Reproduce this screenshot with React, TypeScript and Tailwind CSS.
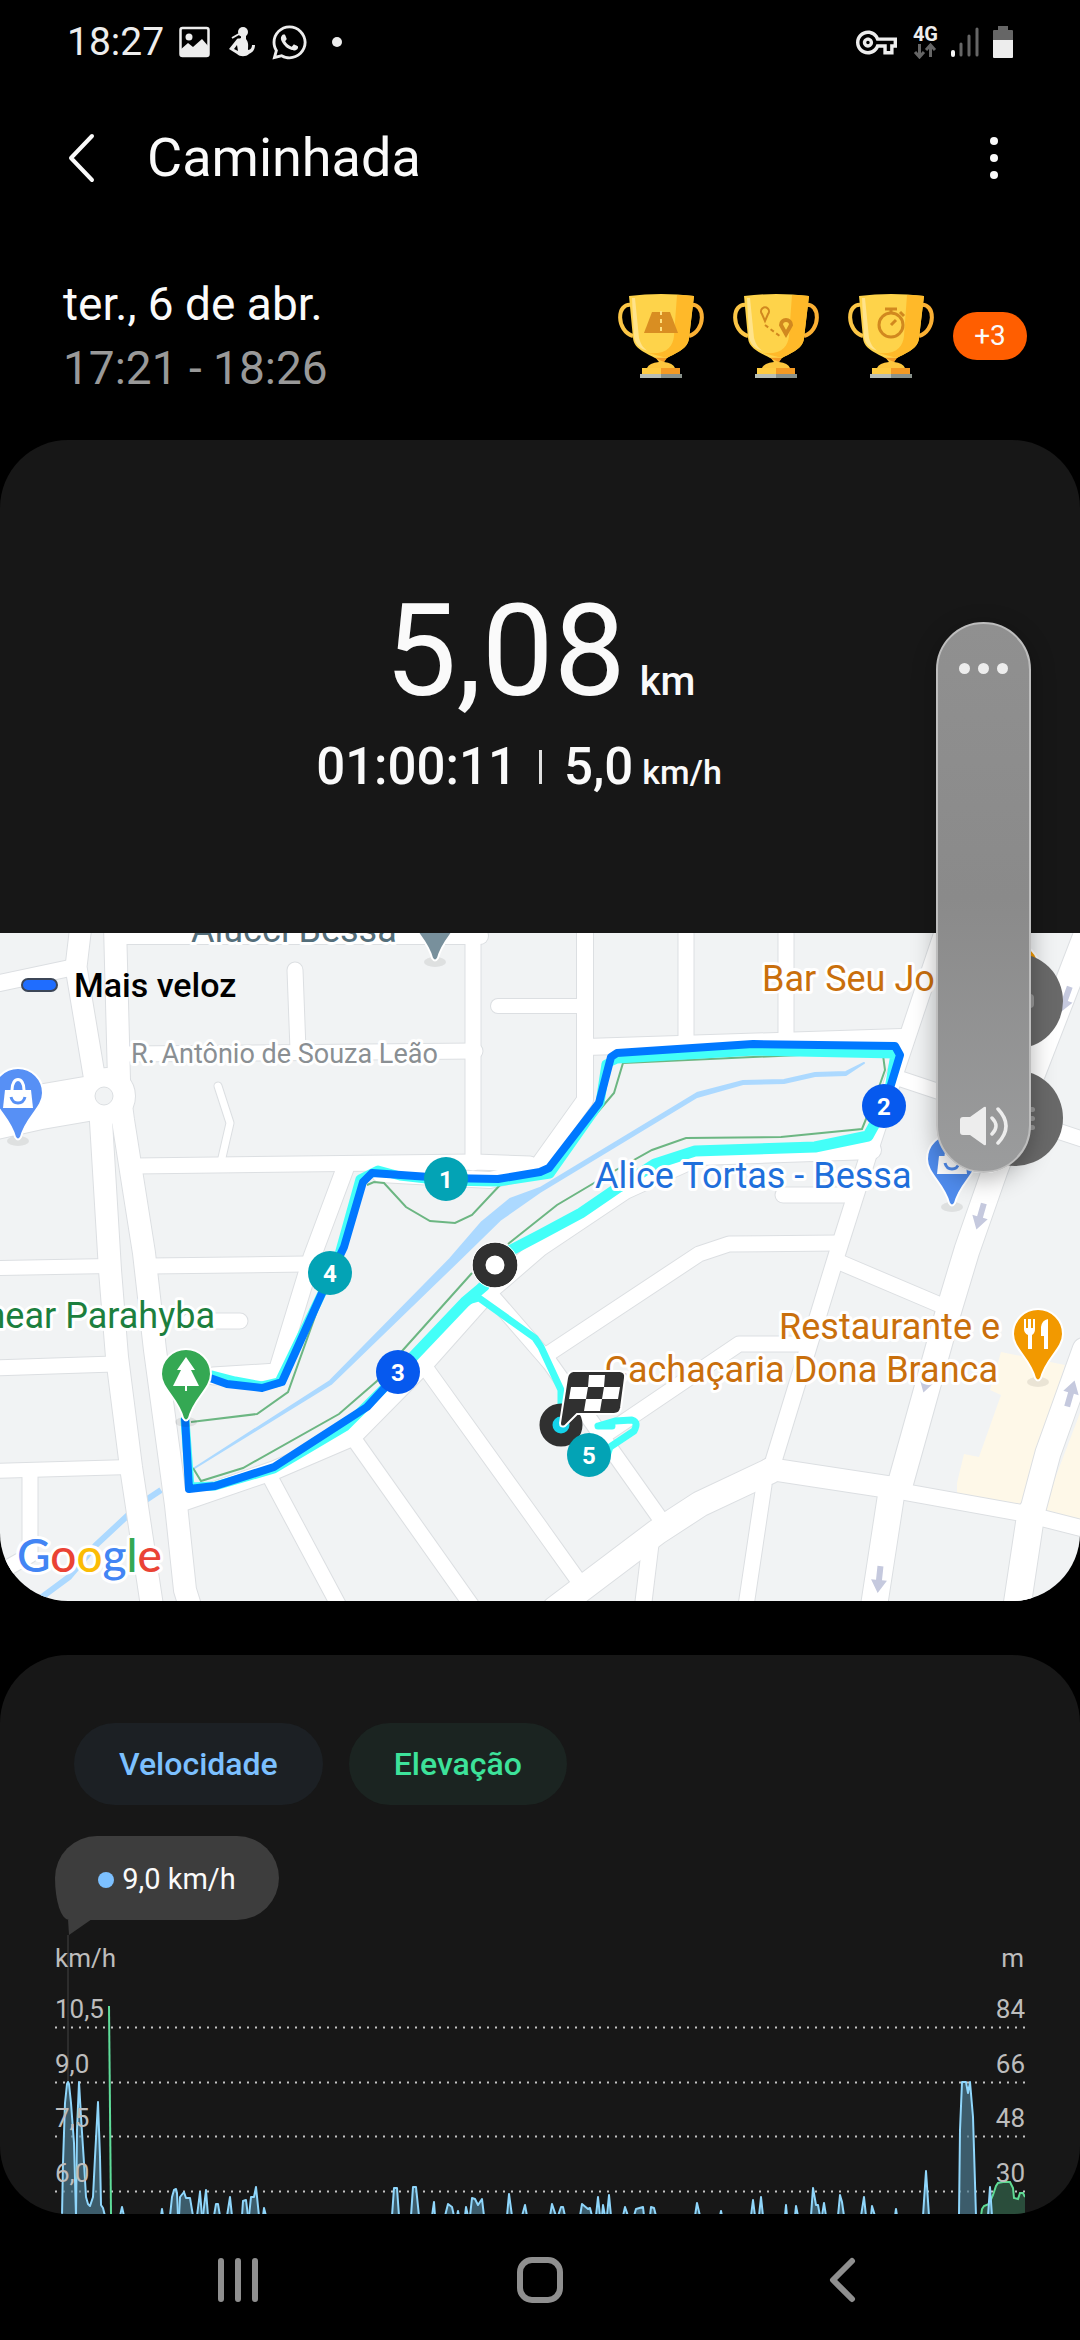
import { useState } from 'react';
import { FaWhatsapp } from 'react-icons/fa';
import { MdOutlineVpnKey } from 'react-icons/md';

const ROADS: { d: string; w: number }[] = [
  { d: 'M81 925L76 967L94 1075', w: 21 },
  { d: 'M115 925L119 1080', w: 22 },
  { d: 'M0 983L70 968', w: 16 },
  { d: 'M-5 1117L40 1107L104 1096', w: 44 },
  { d: 'M100 1105L110 1270L117 1357L131 1467L152 1606', w: 22 },
  { d: 'M119 1090L123 1120L144 1253L155 1350L176 1505L185 1590L190 1606', w: 22 },
  { d: 'M115 936L480 936', w: 16 },
  { d: 'M125 1054L475 1051', w: 15 },
  { d: 'M295 970L298 1050', w: 15 },
  { d: 'M218 1086L230 1123L221 1162', w: 7 },
  { d: 'M473 925L473 1163', w: 15 },
  { d: 'M498 1006L582 1006', w: 14 },
  { d: 'M135 1166L475 1162L530 1164', w: 15 },
  { d: 'M346 1166L312 1257L277 1372L213 1376', w: 17 },
  { d: 'M585 925L585 1100L535 1170L490 1180L380 1174', w: 16 },
  { d: 'M586 1047L902 1037', w: 16 },
  { d: 'M686 925L686 1044', w: 15 },
  { d: 'M786 925L786 1040', w: 15 },
  { d: 'M-5 1268L110 1266', w: 14 },
  { d: 'M150 1266L306 1264', w: 15 },
  { d: 'M-5 1368L114 1364', w: 15 },
  { d: 'M190 1321L240 1321', w: 15 },
  { d: 'M-5 1471L130 1467', w: 14 },
  { d: 'M30 1472L30 1555L-5 1575', w: 15 },
  { d: 'M176 1504L275 1470L352 1437L425 1363L490 1290L540 1247L625 1190L700 1156L872 1150', w: 18 },
  { d: 'M485 1288L550 1363L659 1517', w: 15 },
  { d: 'M425 1367L540 1527L580 1583', w: 15 },
  { d: 'M356 1442L472 1606', w: 15 },
  { d: 'M270 1477L339 1606', w: 15 },
  { d: 'M555 1609L657 1532L700 1504L770 1471', w: 25 },
  { d: 'M770 1469L888 1487', w: 22 },
  { d: 'M888 1489L1022 1513L1085 1529', w: 16 },
  { d: 'M764 1485L746 1606', w: 15 },
  { d: 'M651 1540L643 1606', w: 16 },
  { d: 'M892 1489L874 1606', w: 26 },
  { d: 'M900 1485L948 1313L967 1250L995 1170L1030 1080L1063 995L1090 925', w: 25 },
  { d: 'M1031 1513L1017 1606', w: 27 },
  { d: 'M1032 1513L1048 1453L1085 1350', w: 25 },
  { d: 'M772 1466L837 1254L870 1150L898 1065L945 925', w: 16 },
  { d: 'M895 1077L1000 1112L1085 1140', w: 15 },
  { d: 'M839 1262L945 1307', w: 15 },
  { d: 'M783 1195L852 1195', w: 15 },
  { d: 'M838 1243L729 1244L699 1254L548 1354', w: 15 },
  { d: 'M808 1344L739 1344L606 1434', w: 15 },
];

const MARKERS = [
  { n: 1, x: 446, y: 1179, fill: '#03a3b5' },
  { n: 2, x: 884, y: 1106, fill: '#0659ee' },
  { n: 3, x: 398, y: 1372, fill: '#0659ee' },
  { n: 4, x: 330, y: 1273, fill: '#03a3b5' },
  { n: 5, x: 589, y: 1455, fill: '#03a3b5' },
];

const ARROWS = [
  { x: 879, y: 1580, r: 6 },
  { x: 980, y: 1217, r: 16 },
  { x: 1071, y: 1393, r: 196 },
  { x: 1065, y: 1000, r: 20 },
  { x: 927, y: 1380, r: 16 },
];

// speed peaks, split wherever the curve drops under the visible part
const SPEED: string[] = [
  '62,2216 63,2163 65,2103 67,2084 68,2082 69,2084 71,2103 74,2143 76,2216',
  '76,2216 77,2130 79,2082 81,2117 84,2163 86,2197 88,2204 90,2206 93,2197 95,2157 98,2102 100,2157 101,2205 103,2208 105,2216',
  '120,2216 122,2207 124,2216',
  '161,2216 162,2209 163,2216',
  '170,2216 172,2197 174,2190 176,2189 177,2193 178,2216',
  '179,2216 180,2197 184,2192 186,2198 190,2198 193,2216',
  '197,2216 200,2192 202,2216',
  '203,2216 206,2190 208,2216',
  '214,2216 216,2204 218,2204 220,2216',
  '227,2216 230,2197 232,2216',
  '242,2216 243,2201 246,2200 248,2216',
  '249,2216 251,2197 254,2197 256,2187 259,2216',
  '263,2216 264,2208 266,2216',
  '392,2216 394,2188 397,2188 399,2216',
  '411,2216 413,2187 416,2187 419,2216',
  '432,2216 434,2202 435,2216',
  '445,2216 448,2204 452,2207 454,2216',
  '457,2216 458,2211 459,2216',
  '465,2216 466,2207 468,2216',
  '470,2216 472,2198 475,2199 478,2205 482,2199 484,2216',
  '507,2216 509,2194 512,2216',
  '522,2216 525,2205 527,2216',
  '550,2216 552,2204 556,2216',
  '558,2216 561,2207 563,2207 565,2216',
  '580,2216 582,2204 588,2209 590,2208 592,2216',
  '596,2216 598,2197 600,2216',
  '602,2216 603,2205 605,2216',
  '607,2216 609,2195 611,2216',
  '623,2216 625,2207 628,2216',
  '634,2216 636,2209 643,2207 644,2216',
  '650,2216 651,2207 654,2208 656,2216',
  '695,2216 697,2203 700,2216',
  '720,2216 721,2211 722,2216',
  '751,2216 753,2200 755,2216',
  '759,2216 761,2197 763,2216',
  '785,2216 786,2205 787,2216',
  '795,2216 796,2206 798,2216',
  '811,2216 813,2188 816,2205 818,2205 820,2216',
  '822,2216 824,2203 826,2216',
  '838,2216 840,2195 842,2202 844,2216',
  '861,2216 864,2197 866,2216',
  '871,2216 872,2206 875,2216',
  '895,2216 896,2209 897,2216',
  '923,2216 926,2171 929,2216',
  '959,2216 960,2130 962,2082 966,2082 968,2093 970,2082 973,2117 976,2216',
  '988,2216 990,2187 992,2216',
];

const ELEVATION =
  '981,2216 982,2209 984,2206 989,2204 993,2195 996,2186 998,2183 1003,2182 1010,2182 1013,2188 1014,2198 1018,2199 1020,2193 1023,2193 1025,2197';

const GRID = [
  { y: 2027, left: '10,5', right: '84' },
  { y: 2082, left: '9,0', right: '66' },
  { y: 2136, left: '7,5', right: '48' },
  { y: 2191, left: '6,0', right: '30' },
];

function StatusBar() {
  return (
    <div className="flex h-[84px] items-center justify-between pl-[67px] pr-[66px] text-[#ededed]">
      <div className="flex items-center">
        <span className="text-[39px] leading-[48px]">18:27</span>
        <svg className="ml-[15px] h-[32px] w-[32px]" viewBox="0 0 32 32">
          <rect x="1.5" y="2" width="28" height="28" rx="2" fill="none" stroke="currentColor" strokeWidth="2.5" />
          <circle cx="10" cy="11" r="3.5" fill="currentColor" />
          <path d="M1 24L9 17L14 21L23 13L30 21V29H1Z" fill="currentColor" />
        </svg>
        <svg className="ml-[18px] h-[32px] w-[26px]" viewBox="0 0 26 32">
          <circle cx="14" cy="6" r="5" fill="currentColor" />
          <path d="M10 8L3 12" stroke="currentColor" strokeWidth="2" />
          <path
            d="M12 9H17L17 13C20 17 19 20 19 24C22 24 23 21 23 19H26C26 25 22 27 20 28C17 31 11 31 8 28L0 23L8 13C9 12 10 13 12 12ZM8 19L5 23L9 25Z"
            fill="currentColor"
            fillRule="evenodd"
          />
        </svg>
        <FaWhatsapp className="ml-[15px]" size={39} />
        <span className="ml-[23px] h-[10px] w-[10px] rounded-full bg-[#ededed]" />
      </div>
      <div className="flex items-center">
        <MdOutlineVpnKey size={41} />
        <div className="ml-[16px] flex flex-col items-center">
          <span className="text-[20px] font-bold leading-[18px]">4G</span>
          <svg className="h-[16px] w-[24px]" viewBox="0 0 24 16">
            <path d="M6.500 1V13M2 9L6.500 14L11 9M17.500 14V2M13 7L17.500 2L22 7" fill="none" stroke="#666" strokeWidth="3" />
          </svg>
        </div>
        <svg className="ml-[12px] h-[32px] w-[30px]" viewBox="0 0 30 32">
          <path d="M3 26V29" stroke="#f5f5f5" strokeWidth="4" strokeLinecap="round" />
          <path d="M11 18V29M19 10V29M27 3V29" stroke="#666" strokeWidth="3" strokeLinecap="round" />
        </svg>
        <svg className="ml-[12px] h-[34px] w-[22px]" viewBox="0 0 22 34">
          <path d="M6 1H16V5H20Q21 5 21 6V16H1V6Q1 5 2 5H6Z" fill="#666" />
          <path d="M1 15H21V32Q21 33 20 33H2Q1 33 1 32Z" fill="#ededed" />
        </svg>
      </div>
    </div>
  );
}

function Trophy({ kind }: { kind: 'road' | 'route' | 'time' }) {
  return (
    <svg className="h-[84px] w-[86px]" viewBox="0 0 86 84" role="img" aria-label="Troféu">
      <path d="M14 11C-2 8 -2 37 15 42" fill="none" stroke="#fcc646" strokeWidth="4" />
      <path d="M72 11C88 8 88 37 71 42" fill="none" stroke="#fbb034" strokeWidth="4" />
      <path d="M11 2Q43 -2 76 2L71 44C70 56 55 60 49 64H37C31 60 16 56 15 44Z" fill="#fed34a" />
      <path d="M59 1Q68 1 76 2L71 44C70 56 55 60 49 64L30 59C48 61 55 53 56 42Z" fill="#ffb929" />
      <path d="M14 4H17L21 44C23 51 26 55 30 57C22 55 17 50 16 43Z" fill="#ffe38a" />
      <path d="M37 63H49L46 68Q55 69 57 74H29Q31 69 41 68Z" fill="#fcc63e" />
      <path d="M37 64H49L46 68Z" fill="#f39a24" />
      <path d="M24 74H43V80H24Z" fill="#fecb42" />
      <path d="M43 74H62V80H43Z" fill="#f39a24" />
      <path d="M22 80H43V84H22Z" fill="#b7beb6" />
      <path d="M43 80H64V84H43Z" fill="#89928c" />
      {kind === 'road' && (
        <>
          <path d="M34 18H52L60 39H26Z" fill="#d98e22" />
          <path d="M43 17V41" stroke="#ffdf7d" strokeWidth="2" strokeDasharray="4 4" />
        </>
      )}
      {kind === 'route' && (
        <g fill="none" stroke="#d1881f">
          <path d="M32 27L29 20A4 4 0 1 1 35 20Z" strokeWidth="2" />
          <path d="M53 40L48 31A5 5 0 1 1 58 31Z" strokeWidth="4" />
          <path d="M32 31L48 43" strokeWidth="2" strokeDasharray="4 3" />
        </g>
      )}
      {kind === 'time' && (
        <g fill="none" stroke="#d1881f">
          <circle cx="43" cy="31" r="12" strokeWidth="3" />
          <path d="M37 15H49M43 15V19M52 18L56 22M43 31L48 26" strokeWidth="3" />
        </g>
      )}
    </svg>
  );
}

function Pin({ x, y, fill, children }: { x: number; y: number; fill: string; children?: React.ReactNode }) {
  return (
    <g transform={`translate(${x} ${y})`}>
      <ellipse cx="0" cy="48" rx="11" ry="5" fill="#000" opacity="0.08" />
      <path d="M-25 0A25 25 0 1 1 25 0C25 15 8 24 3 44Q0 49 -3 44C-8 24 -25 15 -25 0Z" fill={fill} stroke="#fff" strokeWidth="2" />
      {children}
    </g>
  );
}

function Bag({ color }: { color: string }) {
  return (
    <>
      <path d="M-13 -3H13L15 15H-15Z" fill="#fff" />
      <path d="M-6 -3C-6 -17 6 -17 6 -3" fill="none" stroke="#fff" strokeWidth="3" />
      <path d="M-7 4C-5 12 5 12 7 4" fill="none" stroke={color} strokeWidth="3" />
    </>
  );
}

function RouteMap() {
  return (
    <svg className="block w-full" viewBox="0 933 1080 668" role="img" aria-label="Mapa do percurso">
      <rect x="0" y="933" width="1080" height="668" fill="#f1f3f4" />
      <path d="M1001 1352L1065 1365L1020 1510L957 1495V1483L964 1454L979 1457L1001 1395L990 1390Z" fill="#fef8e8" />
      <path d="M1085 1400L1040 1518L1085 1526Z" fill="#fef8e8" />

      <g fill="none" stroke="#acd9ff" strokeLinejoin="round">
        <path d="M161 1490L140 1504L96 1545L69 1577L38 1600" strokeWidth="6" />
      </g>

      <g fill="none" stroke="#dcdfe2" strokeLinejoin="round" strokeLinecap="round">
        {ROADS.map((r) => (
          <path key={r.d} d={r.d} strokeWidth={r.w + 2} />
        ))}
        <circle cx="107" cy="1096" r="28" fill="#dcdfe2" strokeWidth="2" />
      </g>
      <g fill="none" stroke="#fff" strokeLinejoin="round" strokeLinecap="round">
        {ROADS.map((r) => (
          <path key={r.d} d={r.d} strokeWidth={r.w} />
        ))}
        <circle cx="107" cy="1096" r="27" fill="#fff" strokeWidth="2" />
      </g>
      <circle cx="104" cy="1096" r="9" fill="#f1f3f4" stroke="#dcdfe2" />

      {/* one-way arrows */}
      {ARROWS.map((a) => (
        <path
          key={`${a.x}-${a.y}`}
          transform={`translate(${a.x} ${a.y}) rotate(${a.r})`}
          d="M-3 -14H3V0H8L0 13L-8 0H-3Z"
          fill="#c5c9de"
        />
      ))}

      {/* river */}
      <path
        d="M864 1063L846 1075L815 1076L784 1083L743 1084L697 1097L540 1192L500 1220L457 1262L331 1384L193 1469L330 1381L450 1259L482 1222L510 1199L540 1188L697 1093L743 1081L784 1080L815 1073L846 1072Z"
        fill="#acd9ff"
        stroke="#acd9ff"
        strokeWidth="2"
        strokeLinejoin="round"
      />

      {/* park outline */}
      <g fill="none" stroke="#6cb682" strokeWidth="2">
        <path d="M367 1185L374 1182L384 1183L406 1207L430 1221L455 1223L472 1215L501 1184" />
        <path d="M585 1127L614 1093L623 1063L864 1052L883 1055L885 1070L879 1087L862 1129L781 1137L686 1138L652 1150L616 1170L557 1205L508 1244" />
        <path d="M472 1273L403 1350L377 1381L339 1414L243 1468L201 1481L193 1468" />
        <path d="M191 1422L257 1414L288 1392L322 1297" />
      </g>

      <g fill="none" stroke="#43fff8" strokeLinejoin="round" strokeLinecap="round">
        <path d="M884 1107L868 1136L815 1147L695 1151L655 1164L619 1187L581 1213L540 1235L500 1256" strokeWidth="11" />
        <path d="M888 1095L895 1054L755 1051L617 1059L606 1064L600 1103L550 1174L498 1182L444 1181L400 1176L378 1170L360 1179L338 1258L322 1293L279 1382L262 1386L235 1381L212 1375" strokeWidth="9" />
        <path d="M185 1420L190 1487L215 1486L274 1469L345 1427L387 1385" strokeWidth="9" />
        <path d="M408 1362L465 1302L484 1286" strokeWidth="11" />
        <path d="M465 1302L479 1298L535 1338L541 1347L561 1390V1425" strokeWidth="7" />
        <path d="M598 1426L615 1421L632 1420Q639 1422 634 1431L610 1447L604 1465M598 1426L612 1426" strokeWidth="7" />
      </g>
      <g fill="none" stroke="#0078ff" strokeWidth="8" strokeLinejoin="round">
        <path d="M890 1088L900 1055L895 1046L753 1044L617 1053L611 1057L599 1103L549 1168L540 1172L498 1179L444 1178L372 1173L363 1182L344 1247L322 1293L282 1382L262 1388L227 1384L210 1378" />
        <path d="M185 1418L189 1489L215 1486L274 1467L367 1407L390 1382" />
      </g>

      {/* place names */}
      <g className="font-['Roboto',sans-serif] font-normal" fontSize="36" stroke="#fff" strokeWidth="6" strokeLinejoin="round" style={{ paintOrder: 'stroke' }}>
        <text x="191" y="942" fill="#546e7a">Alucci Bessa</text>
        <text x="762" y="991" fill="#c96f0c">Bar Seu Jo</text>
        <text x="595" y="1188" fill="#1f6fdb">Alice Tortas - Bessa</text>
        <text x="1000" y="1339" textAnchor="end" fill="#c96f0c">Restaurante e</text>
        <text x="998" y="1382" textAnchor="end" fill="#c96f0c">Cachaçaria Dona Branca</text>
        <text x="215" y="1328" textAnchor="end" fill="#1c7f3e">near Parahyba</text>
        <text x="131" y="1063" fontSize="27" fill="#8a8f93">R. Antônio de Souza Leão</text>
      </g>

      <Pin x={435} y={914} fill="#78909c" />
      <Pin x={18} y={1093} fill="#5790f5">
        <Bag color="#5790f5" />
      </Pin>
      <Pin x={952} y={1159} fill="#4f8bec">
        <Bag color="#4f8bec" />
      </Pin>
      <Pin x={1014} y={968} fill="#f29900" />
      <Pin x={1038} y={1334} fill="#f29900">
        <path d="M-14 -15H-12V-6H-10V-15H-7V-6H-5V-15H-3V-5Q-3 -1 -6 1V15H-10V1Q-14 -1 -14 -5ZM10 -15V15H6V2H3V-7Q4 -14 10 -15Z" fill="#fff" />
      </Pin>
      <Pin x={186} y={1374} fill="#34a853">
        <path d="M0 -17L9 -4H5L13 12H1V17H-1V12H-13L-5 -4H-9Z" fill="#fff" />
      </Pin>

      <circle cx="495" cy="1265" r="16" fill="#fff" stroke="#303030" strokeWidth="13" />
      <circle cx="495" cy="1265" r="23" fill="none" stroke="#fff" strokeWidth="1" />
      <circle cx="561" cy="1425" r="15" fill="#14d3ea" stroke="#303030" strokeWidth="13" />
      <path
        d="M573 1371H620Q626 1372 625 1378L621 1408Q620 1414 614 1414H577L565 1426Q560 1428 560 1423L567 1378Q568 1372 573 1371Z"
        fill="#303030"
        stroke="#fff"
        strokeWidth="2"
      />
      <path d="M589 1375H605L604 1387H588ZM571 1387H588L586 1399H569ZM604 1387H620L618 1399H602ZM586 1399H602L600 1411H584Z" fill="#fff" />

      {MARKERS.map((m) => (
        <g key={m.n}>
          <circle cx={m.x} cy={m.y} r="22" fill={m.fill} />
          <text
            x={m.x}
            y={m.y + 9}
            textAnchor="middle"
            className="font-['Roboto',sans-serif] font-bold"
            fontSize="24"
            fill="#fff"
          >
            {m.n}
          </text>
        </g>
      ))}

      <text x="17" y="1572" className="font-['Lato',sans-serif]" fontSize="46" fontWeight="500" stroke="#fff" strokeWidth="6" strokeLinejoin="round" style={{ paintOrder: 'stroke' }}>
        <tspan fill="#4285f4">G</tspan>
        <tspan fill="#ea4335">o</tspan>
        <tspan fill="#fbbc05">o</tspan>
        <tspan fill="#4285f4">g</tspan>
        <tspan fill="#34a853">l</tspan>
        <tspan fill="#ea4335">e</tspan>
      </text>
    </svg>
  );
}

function Chart() {
  return (
    <svg className="block w-full" viewBox="55 1920 970 294" role="img" aria-label="Gráfico de velocidade e elevação">
      <path d="M68 1919H92L69 1935Z" fill="#3d3d3d" />
      <path d="M68 1935V2082" stroke="#444" strokeWidth="1" />
      {GRID.map((g) => (
        <path key={g.y} d={`M55 ${g.y}.500H1025`} stroke="#c4c4c4" strokeWidth="2" strokeDasharray="2 6" />
      ))}
      <polyline points={`${ELEVATION} 1025,2220`} fill="#2a4d3b" />
      <polyline points={ELEVATION} fill="none" stroke="#5fdb95" strokeWidth="2" />
      <path d="M109 2006L111 2214" stroke="#5fdd9a" strokeWidth="2" />
      {SPEED.map((points) => (
        <polyline key={points} points={points} fill="#4d7b90" fillOpacity="0.7" stroke="#8fd6fb" strokeWidth="2" strokeLinejoin="round" />
      ))}
      <g className="font-['Roboto',sans-serif]" fontSize="26" fill="#bdbdbd">
        <text x="55" y="1967">km/h</text>
        <text x="1024" y="1967" textAnchor="end">m</text>
        {GRID.map((g) => (
          <g key={g.y}>
            <text x="55" y={g.y - 9}>{g.left}</text>
            <text x="1025" y={g.y - 9} textAnchor="end">{g.right}</text>
          </g>
        ))}
      </g>
    </svg>
  );
}

function VolumePanel() {
  const [volume, setVolume] = useState(0);

  return (
    <div className="absolute right-[49px] top-[622px] flex h-[551px] w-[95px] flex-col items-center justify-between rounded-full border-2 border-[#bdbdbd] bg-linear-to-b from-[#909090] via-[#8a8a8a] to-[#9b9c9d] pb-[24px] pt-[30px] shadow-[0_6px_24px_rgba(0,0,0,0.3)]">
      <button type="button" aria-label="Mais opções de som" className="flex h-[28px] items-center gap-[8px]">
        <span className="h-[11px] w-[11px] rounded-full bg-[#ededed]" />
        <span className="h-[11px] w-[11px] rounded-full bg-[#ededed]" />
        <span className="h-[11px] w-[11px] rounded-full bg-[#ededed]" />
      </button>
      <input
        type="range"
        aria-label="Volume"
        min={0}
        max={15}
        value={volume}
        onChange={(e) => setVolume(Number(e.target.value))}
        className="w-[80px] appearance-none bg-transparent [&::-webkit-slider-thumb]:opacity-0"
      />
      <button type="button" aria-label="Silenciar">
        <svg className="h-[42px] w-[50px]" viewBox="0 0 50 42">
          <path d="M4 12H11L25 2Q27 1 27 3V39Q27 41 25 40L11 30H4Q1 30 1 27V15Q1 12 4 12Z" fill="#ededed" />
          <path d="M33 13Q41 21 33 29M39 4Q55 21 39 38" fill="none" stroke="#ededed" strokeWidth="3.500" strokeLinecap="round" />
        </svg>
      </button>
    </div>
  );
}

export default function App() {
  return (
    <div className="relative flex min-h-screen flex-col bg-black font-['Roboto',sans-serif] text-[#fafafa]">
      <StatusBar />

      <header className="flex h-[148px] items-center pl-[66px] pr-[72px]">
        <button type="button" aria-label="Voltar">
          <svg className="h-[52px] w-[30px]" viewBox="0 0 30 52">
            <path d="M26 4L5 26L26 48" fill="none" stroke="#fafafa" strokeWidth="4" strokeLinecap="round" strokeLinejoin="round" />
          </svg>
        </button>
        <h1 className="ml-[51px] flex-1 text-[54px] leading-[64px]">Caminhada</h1>
        <button type="button" aria-label="Mais opções" className="flex w-[28px] flex-col items-center gap-[9px]">
          <span className="h-[8px] w-[8px] rounded-full bg-[#fafafa]" />
          <span className="h-[8px] w-[8px] rounded-full bg-[#fafafa]" />
          <span className="h-[8px] w-[8px] rounded-full bg-[#fafafa]" />
        </button>
      </header>

      <section className="flex h-[208px] items-center justify-between pl-[63px] pr-[53px]">
        <div className="text-[46px] leading-[64px]">
          <p>ter., 6 de abr.</p>
          <p className="text-[#999]">17:21 - 18:26</p>
        </div>
        <div className="flex items-center">
          <div className="flex gap-[29px]">
            <Trophy kind="road" />
            <Trophy kind="route" />
            <Trophy kind="time" />
          </div>
          <span className="ml-[19px] flex h-[48px] w-[74px] items-center justify-center rounded-full bg-[#ff5e00] text-[28px]">+3</span>
        </div>
      </section>

      <section className="overflow-hidden rounded-[68px] bg-[#171717] font-medium">
        <div className="flex flex-col items-center gap-[20px] pb-[134px] pt-[147px]">
          <p className="flex items-baseline gap-[14px]">
            <span className="text-[128px] font-normal leading-[128px]">5,08</span>
            <span className="text-[40px] leading-[48px]">km</span>
          </p>
          <div className="flex items-center pr-[42px]">
            <span className="text-[51px] leading-[64px]">01:00:11</span>
            <span className="mx-[22px] h-[34px] w-[3px] bg-[#e0e0e0]" />
            <p className="flex items-baseline gap-[9px]">
              <span className="text-[51px] leading-[64px]">5,0</span>
              <span className="text-[34px] leading-[40px]">km/h</span>
            </p>
          </div>
        </div>
        <div className="relative">
          <RouteMap />
          <p className="absolute left-[21px] top-[32px] flex items-center gap-[16px] text-[34px] leading-[40px] text-black">
            <span className="h-[14px] w-[37px] rounded-full border-2 border-[#3c4657] bg-[#1f6dff]" />
            Mais veloz
          </p>
          <button
            type="button"
            aria-label="Camadas do mapa"
            className="absolute right-[17px] top-[20px] flex h-[96px] w-[96px] items-center justify-center rounded-full bg-[#696969]"
          >
            <span className="h-[14px] w-[38px] rounded-sm bg-[#999]" />
          </button>
          <button
            type="button"
            aria-label="Opções do mapa"
            className="absolute right-[17px] top-[137px] flex h-[96px] w-[96px] flex-col items-center justify-center gap-[4px] rounded-full bg-[#696969]"
          >
            <span className="h-[5px] w-[40px] rounded-full bg-[#999]" />
            <span className="h-[5px] w-[40px] rounded-full bg-[#999]" />
            <span className="h-[5px] w-[40px] rounded-full bg-[#999]" />
          </button>
        </div>
      </section>

      <section className="mt-[54px] overflow-hidden rounded-[68px] bg-[#171717] px-[55px] pt-[68px]">
        <div className="flex gap-[26px] pl-[19px] text-[32px] font-medium">
          <button type="button" className="h-[82px] rounded-full bg-[#1c2024] px-[45px] text-[#7cc0ff]">
            Velocidade
          </button>
          <button type="button" className="h-[82px] rounded-full bg-[#1b2421] px-[45px] text-[#3de29a]">
            Elevação
          </button>
        </div>
        <div className="mt-[31px] flex h-[84px] w-[224px] items-center justify-center gap-[8px] rounded-[42px] rounded-bl-[14px_42px] bg-[#3d3d3d] pt-[4px] text-[29px]">
          <span className="h-[16px] w-[16px] rounded-full bg-[#7cc0ff]" />
          9,0 km/h
        </div>
        <Chart />
      </section>

      <nav className="flex flex-1 items-center justify-center gap-[256px] pt-[6px]">
        <button type="button" aria-label="Recentes">
          <svg className="h-[46px] w-[46px]" viewBox="0 0 46 46">
            <path d="M6 4V42M23 4V42M40 4V42" stroke="#8f8f8f" strokeWidth="6" strokeLinecap="round" />
          </svg>
        </button>
        <button type="button" aria-label="Início">
          <svg className="h-[46px] w-[46px]" viewBox="0 0 46 46">
            <rect x="3" y="3" width="40" height="40" rx="12" fill="none" stroke="#8f8f8f" strokeWidth="6" />
          </svg>
        </button>
        <button type="button" aria-label="Voltar">
          <svg className="h-[46px] w-[46px]" viewBox="0 0 46 46">
            <path d="M33 4L14 23L33 42" fill="none" stroke="#8f8f8f" strokeWidth="6" strokeLinecap="round" strokeLinejoin="round" />
          </svg>
        </button>
      </nav>

      <VolumePanel />
    </div>
  );
}
